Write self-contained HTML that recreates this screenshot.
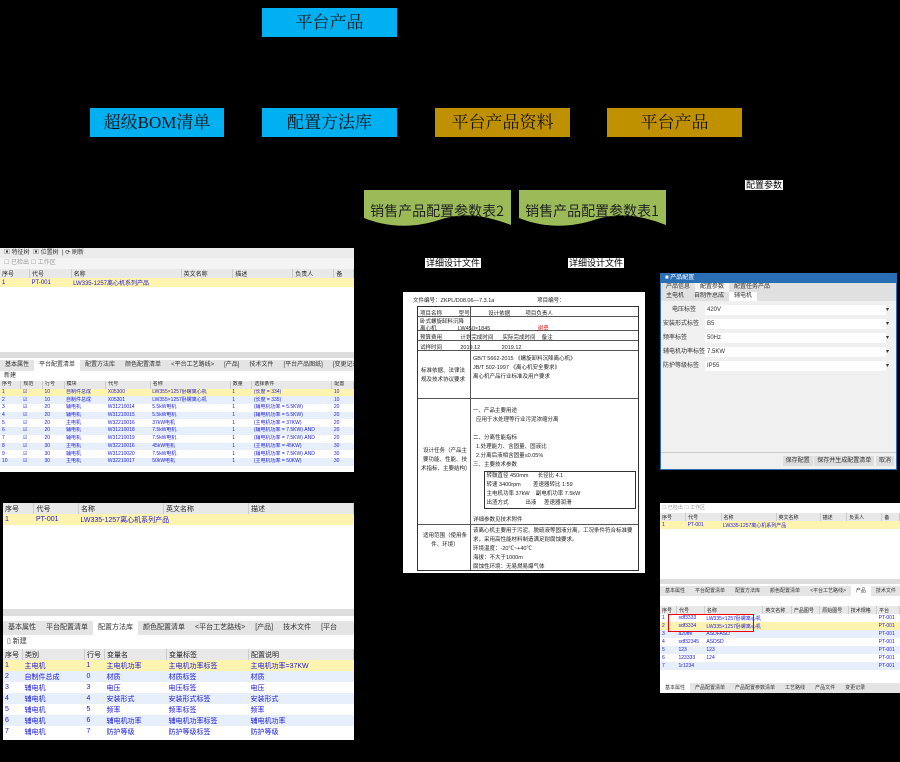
<!DOCTYPE html>
<html><head><meta charset="utf-8">
<style>
*{margin:0;padding:0;box-sizing:border-box}
body{width:900px;height:762px;background:#000;position:relative;overflow:hidden;font-family:"Liberation Sans","Noto Sans CJK SC",sans-serif}
.bx{position:absolute;height:29px;font-family:"Liberation Serif","Noto Serif CJK SC",serif;font-size:17px;color:#111;text-align:center;line-height:29px}
.b{background:#00b0f0}.g{background:#bf9000}
.lbl{position:absolute;background:#fff;color:#000;font-size:9px;line-height:10px;padding:0 1px}
.win{position:absolute;background:#fff;overflow:hidden;font-size:6px;color:#333}
table{border-collapse:collapse;width:100%}
td,th{white-space:nowrap;overflow:hidden;padding:0 2px;text-align:left}
th{background:#e8e8e8;font-weight:normal;border-right:1px solid #ccc;color:#222}
.blu td{color:#1a1adc}
.sel{background:#fff3b0}
.alt{background:#e6effb}
.tabs{background:#e4e4e4;white-space:nowrap;overflow:hidden}
.tabs span{display:inline-block;padding:0 5px}
.t1 td,.t1 th{height:7.7px;line-height:7px;font-size:5px}
</style></head><body>

<div class="bx b" style="left:262px;top:8px;width:135px">平台产品</div>
<div class="bx b" style="left:90px;top:108px;width:134px">超级BOM清单</div>
<div class="bx b" style="left:262px;top:108px;width:135px">配置方法库</div>
<div class="bx g" style="left:435px;top:108px;width:135px">平台产品资料</div>
<div class="bx g" style="left:607px;top:108px;width:135px">平台产品</div>

<svg style="position:absolute;left:364px;top:190px" width="305" height="52">
<path d="M0 0H147V35C120 25 100 22 75 30C50 38 25 38 0 28Z" fill="#9bbb59"/>
<path d="M155 0H302V35C275 25 255 22 230 30C205 38 180 38 155 28Z" fill="#9bbb59"/>
<text x="73" y="26" font-size="14" text-anchor="middle" fill="#222" font-family="Noto Sans CJK SC">销售产品配置参数表2</text>
<text x="228" y="26" font-size="14" text-anchor="middle" fill="#222" font-family="Noto Sans CJK SC">销售产品配置参数表1</text>
</svg>
<div class="lbl" style="left:745px;top:180px">配置参数</div>
<div class="lbl" style="left:425px;top:258px">详细设计文件</div>
<div class="lbl" style="left:568px;top:258px">详细设计文件</div>

<!-- window 1 -->
<div class="win" style="left:0;top:248px;width:354px;height:224px">
<div style="height:10px;background:#ececec;padding-left:4px;line-height:10px">▣ 特征树 &nbsp;▣ 位置树 &nbsp;| ⟳ 刷新</div>
<div style="height:11px;background:#f4f4f4;padding-left:4px;line-height:11px;color:#999">☐ 已检出 ☐ 工作区</div>
<table><tr style="height:9px"><th>序号</th><th>代号</th><th style="width:110px">名称</th><th>英文名称</th><th style="width:60px">描述</th><th>负责人</th><th>备</th></tr>
<tr class="sel blu" style="height:8px"><td>1</td><td>PT-001</td><td colspan="5">LW335-1257离心机系列产品</td></tr></table>
<div style="height:65px"></div>
<div style="height:6px;background:#ddd"></div>
<div class="tabs" style="height:11px;line-height:11px;margin-top:2px"><span>基本属性</span><span style="background:#fff">平台配置清单</span><span>配置方法库</span><span>颜色配置清单</span><span>&lt;平台工艺路线&gt;</span><span>[产品]</span><span>技术文件</span><span>[平台产品图纸]</span><span>[变更记录]</span></div>
<div style="height:10px;line-height:10px;padding-left:4px">新建</div>
<table class="t1"><tr><th>序号</th><th>规范</th><th>行号</th><th>模块</th><th>代号</th><th style="width:80px">名称</th><th>数量</th><th style="width:80px">选择条件</th><th>配置</th></tr>
<tr class="sel blu"><td>1</td><td>☑</td><td>10</td><td>自制件总成</td><td>X05300</td><td>LW355×1257卧螺离心机</td><td>1</td><td>(长度 = 334)</td><td>10</td></tr>
<tr class="alt blu"><td>2</td><td>☑</td><td>10</td><td>自制件总成</td><td>X05301</td><td>LW355×1257卧螺离心机</td><td>1</td><td>(长度 = 335)</td><td>10</td></tr>
<tr class="blu"><td>3</td><td>☑</td><td>20</td><td>辅电机</td><td>W31210014</td><td>5.5kW电机</td><td>1</td><td>(辅电机功率 = 5.5KW)</td><td>20</td></tr>
<tr class="alt blu"><td>4</td><td>☑</td><td>20</td><td>辅电机</td><td>W31210015</td><td>5.5kW电机</td><td>1</td><td>(辅电机功率 = 5.5KW)</td><td>20</td></tr>
<tr class="blu"><td>5</td><td>☑</td><td>20</td><td>主电机</td><td>W32210016</td><td>37kW电机</td><td>1</td><td>(主电机功率 = 37KW)</td><td>20</td></tr>
<tr class="alt blu"><td>6</td><td>☑</td><td>20</td><td>辅电机</td><td>W31210018</td><td>7.5kW电机</td><td>1</td><td>(辅电机功率 = 7.5KW) AND</td><td>20</td></tr>
<tr class="blu"><td>7</td><td>☑</td><td>20</td><td>辅电机</td><td>W31210019</td><td>7.5kW电机</td><td>1</td><td>(辅电机功率 = 7.5KW) AND</td><td>20</td></tr>
<tr class="alt blu"><td>8</td><td>☑</td><td>30</td><td>主电机</td><td>W32210016</td><td>45kW电机</td><td>1</td><td>(主电机功率 = 45KW)</td><td>30</td></tr>
<tr class="blu"><td>9</td><td>☑</td><td>30</td><td>辅电机</td><td>W31210020</td><td>7.5kW电机</td><td>1</td><td>(辅电机功率 = 7.5KW) AND</td><td>30</td></tr>
<tr class="alt blu"><td>10</td><td>☑</td><td>30</td><td>主电机</td><td>W32210017</td><td>50kW电机</td><td>1</td><td>(主电机功率 = 50KW)</td><td>30</td></tr>
</table></div>

<!-- window 2 -->
<div class="win" style="left:3px;top:503px;width:351px;height:237px;font-size:7px">
<table><tr style="height:11px"><th>序号</th><th>代号</th><th style="width:85px">名称</th><th style="width:85px">英文名称</th><th style="width:105px">描述</th></tr>
<tr class="sel blu" style="height:11px"><td>1</td><td>PT-001</td><td colspan="3">LW335-1257离心机系列产品</td></tr></table>
<div style="height:84px"></div>
<div style="height:7px;background:#ddd"></div>
<div class="tabs" style="height:14px;line-height:14px;margin-top:5px"><span>基本属性</span><span>平台配置清单</span><span style="background:#fff">配置方法库</span><span>颜色配置清单</span><span>&lt;平台工艺路线&gt;</span><span>[产品]</span><span>技术文件</span><span>[平台</span></div>
<div style="height:14px;line-height:14px;padding-left:4px">▯ 新建</div>
<table><tr style="height:11px"><th>序号</th><th style="width:62px">类别</th><th>行号</th><th style="width:62px">变量名</th><th style="width:82px">变量标签</th><th style="width:105px">配置说明</th></tr>
<tr class="sel blu" style="height:11px"><td>1</td><td>主电机</td><td>1</td><td>主电机功率</td><td>主电机功率标签</td><td>主电机功率=37KW</td></tr>
<tr class="alt blu" style="height:11px"><td>2</td><td>自制件总成</td><td>0</td><td>材质</td><td>材质标签</td><td>材质</td></tr>
<tr class="blu" style="height:11px"><td>3</td><td>辅电机</td><td>3</td><td>电压</td><td>电压标签</td><td>电压</td></tr>
<tr class="alt blu" style="height:11px"><td>4</td><td>辅电机</td><td>4</td><td>安装形式</td><td>安装形式标签</td><td>安装形式</td></tr>
<tr class="blu" style="height:11px"><td>5</td><td>辅电机</td><td>5</td><td>频率</td><td>频率标签</td><td>频率</td></tr>
<tr class="alt blu" style="height:11px"><td>6</td><td>辅电机</td><td>6</td><td>辅电机功率</td><td>辅电机功率标签</td><td>辅电机功率</td></tr>
<tr class="blu" style="height:11px"><td>7</td><td>辅电机</td><td>7</td><td>防护等级</td><td>防护等级标签</td><td>防护等级</td></tr>
</table></div>

<!-- document -->
<div class="win" style="left:403px;top:292px;width:242px;height:281px;font-size:5.5px;color:#222">
<div style="padding:4px 0 0 10px">文件编号：ZKPL/D08.06—7.3.1a &nbsp;&nbsp;&nbsp;&nbsp;&nbsp;&nbsp;&nbsp;&nbsp;&nbsp;&nbsp;&nbsp;&nbsp;&nbsp;&nbsp;&nbsp;&nbsp;&nbsp;&nbsp;&nbsp;&nbsp;&nbsp;&nbsp;&nbsp;&nbsp;&nbsp;&nbsp; 项目编号：</div>
<div style="position:absolute;left:14px;top:14px;width:222px;height:265px;border:1px solid #333">
<div style="height:10px;border-bottom:1px solid #555"></div>
<div style="height:14px;border-bottom:1px solid #555"></div>
<div style="height:10px;border-bottom:1px solid #555"></div>
<div style="height:10px;border-bottom:1px solid #555"></div>
<div style="height:48px;border-bottom:1px solid #555"></div>
<div style="height:126px;border-bottom:1px solid #555"></div>
<div style="position:absolute;left:52px;top:0;bottom:0;border-left:1px solid #555"></div>
<div style="position:absolute;left:2px;top:2px;line-height:10px">项目名称 &nbsp;&nbsp;&nbsp;&nbsp;&nbsp;&nbsp;&nbsp;&nbsp;&nbsp; 型号 &nbsp;&nbsp;&nbsp;&nbsp;&nbsp;&nbsp;&nbsp;&nbsp;&nbsp;&nbsp; 设计依据 &nbsp;&nbsp;&nbsp;&nbsp;&nbsp;&nbsp;&nbsp;&nbsp; 项目负责人</div>
<div style="position:absolute;left:2px;top:12px;line-height:7px">卧式螺旋卸料沉降<br>离心机 &nbsp;&nbsp;&nbsp;&nbsp;&nbsp;&nbsp;&nbsp;&nbsp;&nbsp;&nbsp;&nbsp;&nbsp; LW450×1845 &nbsp;&nbsp;&nbsp;&nbsp;&nbsp;&nbsp;&nbsp;&nbsp;&nbsp;&nbsp;&nbsp;&nbsp;&nbsp;&nbsp;&nbsp;&nbsp;&nbsp;&nbsp;&nbsp;&nbsp;&nbsp;&nbsp;&nbsp;&nbsp;&nbsp;&nbsp;&nbsp;&nbsp;&nbsp; <span style="color:#d22">谢勇</span></div>
<div style="position:absolute;left:2px;top:26px;line-height:10px">预算费用 &nbsp;&nbsp;&nbsp;&nbsp;&nbsp;&nbsp;&nbsp;&nbsp;&nbsp;&nbsp; 计划完成时间 &nbsp;&nbsp;&nbsp;&nbsp; 实际完成时间 &nbsp;&nbsp; 备注</div>
<div style="position:absolute;left:2px;top:36px;line-height:10px">试样时间 &nbsp;&nbsp;&nbsp;&nbsp;&nbsp;&nbsp;&nbsp;&nbsp;&nbsp;&nbsp; 2019.12 &nbsp;&nbsp;&nbsp;&nbsp;&nbsp;&nbsp;&nbsp;&nbsp;&nbsp;&nbsp;&nbsp;&nbsp; 2019.12</div>
<div style="position:absolute;left:3px;top:60px;width:48px;line-height:9px">标准依据、法律法规及技术协议要求</div>
<div style="position:absolute;left:55px;top:48px;line-height:9px">GB/T 5662-2015 《螺旋卸料沉降离心机》<br>JB/T 502-1997 《离心机安全要求》<br>离心机产品行业标准及用户要求</div>
<div style="position:absolute;left:3px;top:140px;width:48px;line-height:9px;text-align:center">设计任务（产品主要功能、性能、技术指标、主要结构）</div>
<div style="position:absolute;left:55px;top:100px;line-height:9px">一、产品主要用途<br>&nbsp;&nbsp;应用于水处理等行业污泥浓缩分离<br><br>二、分离性能指标<br>&nbsp;&nbsp;1.处理能力、含固量、固液比<br>&nbsp;&nbsp;2.分离后液相含固量≤0.05%<br>三、主要技术参数</div>
<div style="position:absolute;left:66px;top:164px;width:152px;height:38px;border:1px solid #333;line-height:9px">&nbsp;转鼓直径 450mm &nbsp;&nbsp;&nbsp;&nbsp; 长径比 4.1<br>&nbsp;转速 3400rpm &nbsp;&nbsp;&nbsp;&nbsp;&nbsp;&nbsp; 差速器转比 1:59<br>&nbsp;主电机功率 37kW &nbsp;&nbsp; 副电机功率 7.5kW<br>&nbsp;出渣方式 &nbsp;&nbsp;&nbsp;&nbsp;&nbsp;&nbsp;&nbsp;&nbsp;&nbsp; 出液 &nbsp;&nbsp;&nbsp; 差速器润滑</div>
<div style="position:absolute;left:55px;top:208px">详细参数见技术附件</div>
<div style="position:absolute;left:3px;top:225px;width:48px;line-height:9px;text-align:center">适用范围（使用条件、环境）</div>
<div style="position:absolute;left:55px;top:220px;width:165px;line-height:9px">该离心机主要用于污泥、脱硫液等固液分离，工况条件符合标准要求，采用高性能材料制造满足耐腐蚀要求。<br>环境温度：-20℃~+40℃<br>海拔：不大于1000m<br>腐蚀性环境：无易燃易爆气体</div>
</div></div>

<!-- dialog -->
<div class="win" style="left:660px;top:273px;width:237px;height:197px;background:#f0f0f0;border:1px solid #2a6fb5">
<div style="height:9px;background:#2a6fb5;color:#fff;line-height:9px;padding-left:4px">■ 产品配置</div>
<div class="tabs" style="height:9px;line-height:9px;background:#e0e0e0"><span>产品信息</span><span style="background:#f4f4f4">配置参数</span><span>配置任务产品</span></div>
<div class="tabs" style="height:9px;line-height:9px;background:#e0e0e0"><span>主电机</span><span>自制件总成</span><span style="background:#fff">辅电机</span></div>
<div style="padding:2px 2px;line-height:10px">
<div style="height:14px;display:flex;align-items:center"><span style="width:42px;text-align:center">电压标签</span><span style="flex:1;background:#fff;height:10px;padding-left:2px">420V</span><span style="width:8px">▾</span></div>
<div style="height:14px;display:flex;align-items:center"><span style="width:42px">安装形式标签</span><span style="flex:1;background:#fff;height:10px;padding-left:2px">B5</span><span style="width:8px">▾</span></div>
<div style="height:14px;display:flex;align-items:center"><span style="width:42px">频率标签</span><span style="flex:1;background:#fff;height:10px;padding-left:2px">50Hz</span><span style="width:8px">▾</span></div>
<div style="height:14px;display:flex;align-items:center"><span style="width:42px">辅电机功率标签</span><span style="flex:1;background:#fff;height:10px;padding-left:2px">7.5KW</span><span style="width:8px">▾</span></div>
<div style="height:14px;display:flex;align-items:center"><span style="width:42px">防护等级标签</span><span style="flex:1;background:#fff;height:10px;padding-left:2px">IP55</span><span style="width:8px">▾</span></div>
</div>
<div style="position:absolute;left:0;right:0;bottom:0;height:17px;border-top:1px solid #ccc;text-align:right;line-height:17px;padding-right:2px"><span style="background:#ddd;padding:2px 3px">保存配置</span> <span style="background:#ddd;padding:2px 3px">保存并生成配置清单</span> <span style="background:#ddd;padding:2px 3px">取消</span></div>
</div>

<!-- window 5 -->
<div class="win" style="left:660px;top:503px;width:240px;height:190px;font-size:5px">
<div style="height:10px;line-height:10px;padding-left:2px;color:#999">☐ 已检出 ☐ 工作区</div>
<table><tr style="height:8px"><th>序号</th><th>代号</th><th style="width:55px">名称</th><th>英文名称</th><th>描述</th><th>负责人</th><th>备</th></tr>
<tr class="sel blu" style="height:8px"><td>1</td><td>PT-001</td><td colspan="5">LW335-1257离心机系列产品</td></tr></table>
<div style="height:50px"></div>
<div style="height:5px;background:#ddd"></div>
<div class="tabs" style="height:10px;line-height:10px;margin-top:2px"><span>基本属性</span><span>平台配置清单</span><span>配置方法库</span><span>颜色配置清单</span><span>&lt;平台工艺路线&gt;</span><span style="background:#fff">产品</span><span>技术文件</span><span>平台产品图纸</span></div>
<div style="height:10px"></div>
<table><tr style="height:8px"><th>序号</th><th>代号</th><th style="width:55px">名称</th><th>英文名称</th><th>产品图号</th><th>原始图号</th><th>技术规格</th><th>平台</th></tr>
<tr class="blu" style="height:8px"><td>1</td><td>sdf3333</td><td>LW335×1257卧螺离心机</td><td></td><td></td><td></td><td></td><td>PT-001</td></tr>
<tr class="sel blu" style="height:8px"><td>2</td><td>sdf3334</td><td>LW335×1257卧螺离心机</td><td></td><td></td><td></td><td></td><td>PT-001</td></tr>
<tr class="alt blu" style="height:8px"><td>3</td><td>a20ffe</td><td>ASDFASD</td><td></td><td></td><td></td><td></td><td>PT-001</td></tr>
<tr class="blu" style="height:8px"><td>4</td><td>sdf32345</td><td>ASDSD</td><td></td><td></td><td></td><td></td><td>PT-001</td></tr>
<tr class="alt blu" style="height:8px"><td>5</td><td>123</td><td>123</td><td></td><td></td><td></td><td></td><td>PT-001</td></tr>
<tr class="blu" style="height:8px"><td>6</td><td>123333</td><td>124</td><td></td><td></td><td></td><td></td><td>PT-001</td></tr>
<tr class="alt blu" style="height:8px"><td>7</td><td>1r1234</td><td></td><td></td><td></td><td></td><td></td><td>PT-001</td></tr>
</table>
<div style="position:absolute;left:8px;top:111px;width:86px;height:18px;border:1px solid #e00"></div>
<div class="tabs" style="position:absolute;left:0;right:0;bottom:0;height:10px;line-height:10px"><span style="background:#fff">基本属性</span><span>产品配置清单</span><span>产品配置参数清单</span><span>工艺路线</span><span>产品文件</span><span>变更记录</span></div>
</div>

</body></html>
